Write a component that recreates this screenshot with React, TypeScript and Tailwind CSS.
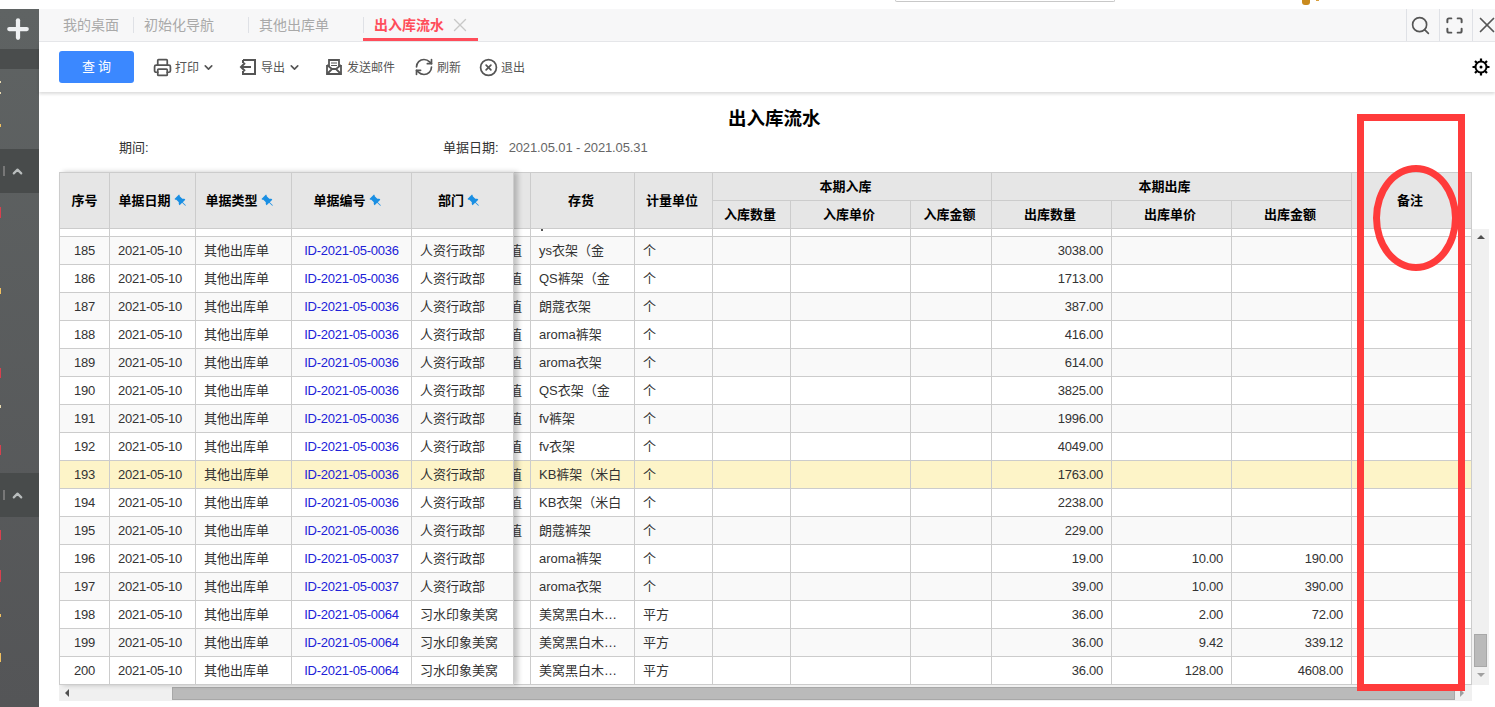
import { ChevronDown, ChevronUp, CircleX, Maximize, Plus, Printer, RefreshCw, Search, X } from "lucide-react";
import { BsPinAngleFill } from "react-icons/bs";

const font = "font-['Liberation_Sans','Noto_Sans_CJK_SC',sans-serif]";

type Row = {
  no: number;
  id: string;
  dept: string;
  hidden: string;
  stock: string;
  unit: string;
  outQty: string;
  outPrice?: string;
  outAmount?: string;
};

const base = (no: number, stock: string, outQty: string): Row => ({
  no,
  id: "ID-2021-05-0036",
  dept: "人资行政部",
  hidden: "值",
  stock,
  unit: "个",
  outQty,
});

const rows: Row[] = [
  base(185, "ys衣架（金", "3038.00"),
  base(186, "QS裤架（金", "1713.00"),
  base(187, "朗蔻衣架", "387.00"),
  base(188, "aroma裤架", "416.00"),
  base(189, "aroma衣架", "614.00"),
  base(190, "QS衣架（金", "3825.00"),
  base(191, "fv裤架", "1996.00"),
  base(192, "fv衣架", "4049.00"),
  base(193, "KB裤架（米白", "1763.00"),
  base(194, "KB衣架（米白", "2238.00"),
  base(195, "朗蔻裤架", "229.00"),
  { ...base(196, "aroma裤架", "19.00"), id: "ID-2021-05-0037", hidden: "", outPrice: "10.00", outAmount: "190.00" },
  { ...base(197, "aroma衣架", "39.00"), id: "ID-2021-05-0037", hidden: "", outPrice: "10.00", outAmount: "390.00" },
  { no: 198, id: "ID-2021-05-0064", dept: "习水印象美窝", hidden: "", stock: "美窝黑白木…", unit: "平方", outQty: "36.00", outPrice: "2.00", outAmount: "72.00" },
  { no: 199, id: "ID-2021-05-0064", dept: "习水印象美窝", hidden: "", stock: "美窝黑白木…", unit: "平方", outQty: "36.00", outPrice: "9.42", outAmount: "339.12" },
  { no: 200, id: "ID-2021-05-0064", dept: "习水印象美窝", hidden: "", stock: "美窝黑白木…", unit: "平方", outQty: "36.00", outPrice: "128.00", outAmount: "4608.00" },
];

const rowBg = (no: number) => (no === 193 ? "bg-[#fdf4c8]" : no % 2 ? "bg-[#f9f9f9]" : "bg-white");
const cell = "h-full shrink-0 border-r border-[#cccccc] flex items-center overflow-hidden whitespace-nowrap";
const head = "shrink-0 border-r border-b border-[#cccccc] flex items-center justify-center font-bold text-black";
const num = "tracking-[-0.25px]";
const tool = "mt-[2px]";

function Pin() {
  return <BsPinAngleFill size={13} className="ml-[3px] -scale-x-100 text-[#1a8fe3]" />;
}

function Export() {
  return (
    <svg width="17" height="16" viewBox="0 0 17 16" fill="none" stroke="#555555" strokeWidth="2">
      <path d="M4 1h12v14H4v-3M4 4V1" />
      <path d="M12 8H2M6 4 2 8l4 4" />
    </svg>
  );
}

function MailOpen() {
  return (
    <svg width="16" height="16" viewBox="0 0 16 16" fill="none" stroke="#555555" strokeWidth="1.8">
      <path d="M1 6v9h14V6" />
      <path d="M3 8V1h10v7" />
      <path d="M1 15l5-5h4l5 5M1 6l5 4M15 6l-5 4" />
      <path d="M5 4h6M5 6.500h6" strokeWidth="1.2" />
    </svg>
  );
}

function Gear() {
  return (
    <svg width="18" height="18" viewBox="0 0 18 18" fill="none" stroke="#000000">
      <circle cx="9" cy="9" r="5.500" strokeWidth="2" />
      <circle cx="9" cy="9" r="1.500" fill="#000000" stroke="none" />
      <path d="M9 0.500v3M9 14.500v3M0.500 9h3M14.500 9h3M3 3l2 2M13 13l2 2M15 3l-2 2M5 13l-2 2" strokeWidth="2.200" />
    </svg>
  );
}

function SideBand() {
  return (
    <div className="flex h-[44px] shrink-0 items-center bg-[#484b4b]">
      <div className="ml-[3px] h-[10px] w-[2px] bg-[#777777]" />
      <ChevronUp size={15} strokeWidth={3.5} className="ml-[5px] text-[#b9bdbd]" />
    </div>
  );
}

// clipped ends of the menu labels, only a pixel of each is showing
function Sliver({ cls }: { cls: string }) {
  return <div className={`w-px shrink-0 ${cls}`} />;
}

function Sidebar() {
  return (
    <aside className="flex w-[39px] shrink-0 flex-col bg-[linear-gradient(#5f6363,#545557)]">
      <div className="flex h-[40px] shrink-0 items-center justify-center pr-[3px]">
        <Plus size={30} strokeWidth={3.4} className="text-[#eef0f2]" />
      </div>
      <div className="h-[20px] shrink-0 bg-[#4a4d4d]" />
      <Sliver cls="mt-[12px] h-[2px] bg-[#e8d9b0]" />
      <Sliver cls="mt-[9px] h-[2px] bg-[#e8d9b0]" />
      <Sliver cls="mt-[30px] h-[3px] bg-[#f0c060]" />
      <div className="mt-[22px]" />
      <SideBand />
      <Sliver cls="mt-[14px] h-[11px] bg-[#d8404e]" />
      <Sliver cls="mt-[70px] h-[6px] bg-[#f0c060]" />
      <Sliver cls="mt-[74px] h-[10px] bg-[#d8404e]" />
      <Sliver cls="mt-[27px] h-[3px] bg-[#e8d9b0]" />
      <Sliver cls="mt-[37px] h-[10px] bg-[#d8404e]" />
      <div className="mt-[18px]" />
      <SideBand />
      <Sliver cls="mt-[13px] h-[10px] bg-[#d8404e]" />
      <Sliver cls="mt-[30px] h-[12px] bg-[#d8404e]" />
      <Sliver cls="mt-[32px] h-[3px] bg-[#f0c060]" />
      <Sliver cls="mt-[36px] h-[9px] bg-[#f0c060]" />
    </aside>
  );
}

function Tabs() {
  const tabs = [
    { label: "我的桌面", w: "w-[95px]", pad: "pl-[24px]" },
    { label: "初始化导航", w: "w-[115px]", pad: "pl-[10px]" },
    { label: "其他出库单", w: "w-[115px]", pad: "pl-[10px]" },
  ];
  return (
    <div className="flex h-[33px] shrink-0 border-b border-[#e6e7ea] bg-[#f7f7f8]">
      {tabs.map((t) => (
        <div key={t.label} className={`flex h-full items-center ${t.w} ${t.pad} text-[14px] text-[#a9a9a9]`}>
          <span className="flex-1">{t.label}</span>
          <div className="h-[16px] w-px bg-[#dfe1e6]" />
        </div>
      ))}
      <div className="-ml-px flex h-[32px] w-[115px] items-center border-b-[3px] border-[#ff4d5a] pl-[11px] pt-[3px] text-[14px] font-bold text-[#ff4d5a]">
        出入库流水
        <X size={22} strokeWidth={1.5} className="ml-[5px] shrink-0 text-[#c8c8c8]" />
      </div>
      <div className="flex-1" />
      <div className="flex h-full w-[33px] items-center justify-center border-l border-[#dfe1e6] pr-[6px]">
        <Search size={21} strokeWidth={1.9} className="shrink-0 text-[#555555]" />
      </div>
      <div className="flex h-full w-[33px] items-center justify-center border-l border-[#dfe1e6] pr-[4px]">
        <Maximize size={19} strokeWidth={2.5} className="shrink-0 text-[#555555]" />
      </div>
      <div className="flex h-full w-[23px] items-center justify-center border-l border-[#dfe1e6] pl-[5px]">
        <X size={26} strokeWidth={1.6} className="shrink-0 text-[#555555]" />
      </div>
    </div>
  );
}

function Toolbar() {
  return (
    <div className="relative z-20 flex h-[50px] shrink-0 items-center bg-white pl-[20px] text-[12px] text-[#555555] shadow-[0_2px_3px_rgba(0,0,0,0.14)]">
      <button className="h-[32px] w-[75px] rounded-[3px] bg-[#3b88ff] pl-[3px] text-[13px] tracking-[3px] text-white">查询</button>
      <Printer size={19} strokeWidth={2.2} className="ml-[19px]" />
      <span className={`ml-[3px] ${tool}`}>打印</span>
      <ChevronDown size={13} strokeWidth={3} className="ml-[3px]" />
      <div className="ml-[24px]"><Export /></div>
      <span className={`ml-[5px] ${tool}`}>导出</span>
      <ChevronDown size={13} strokeWidth={3} className="ml-[3px]" />
      <div className="ml-[25px]"><MailOpen /></div>
      <span className={`ml-[5px] ${tool}`}>发送邮件</span>
      <RefreshCw size={20} strokeWidth={2} className="ml-[19px]" />
      <span className={`ml-[3px] ${tool}`}>刷新</span>
      <CircleX size={19} strokeWidth={2.2} className="ml-[18px]" />
      <span className={`ml-[3px] ${tool}`}>退出</span>
      <div className="flex-1" />
      <div className="mr-[5px]"><Gear /></div>
    </div>
  );
}

function FrozenHead() {
  const h = "h-[57px] border-t";
  return (
    <div className="flex h-[57px] bg-[#e6e6e6]">
      <div className={`${head} ${h} w-[51px] border-l`}>序号</div>
      <div className={`${head} ${h} w-[86px]`}>单据日期<Pin /></div>
      <div className={`${head} ${h} w-[96px] pr-[8px]`}>单据类型<Pin /></div>
      <div className={`${head} ${h} w-[120px] pr-[8px]`}>单据编号<Pin /></div>
      <div className={`${head} ${h} w-[102px] pr-[7px]`}>部门<Pin /></div>
    </div>
  );
}

function FrozenRow({ r }: { r: Row }) {
  return (
    <div className={`flex h-[28px] border-b border-[#cccccc] ${rowBg(r.no)}`}>
      <div className={`${cell} ${num} w-[51px] justify-center border-l`}>{r.no}</div>
      <div className={`${cell} ${num} w-[86px] pl-[8px]`}>2021-05-10</div>
      <div className={`${cell} w-[96px] pl-[8px]`}>其他出库单</div>
      <div className={`${cell} ${num} w-[120px] justify-center text-[#2020d8]`}>{r.id}</div>
      <div className={`${cell} w-[102px] pl-[8px]`}>{r.dept}</div>
    </div>
  );
}

function ScrollHead() {
  const h = "h-[57px] border-t pr-[3px]";
  const sub = `${head} pr-[3px]`;
  return (
    <div className="flex h-[57px] bg-[#e6e6e6]">
      <div className={`${head} h-[57px] border-t w-[17px]`} />
      <div className={`${head} ${h} w-[104px]`}>存货</div>
      <div className={`${head} ${h} w-[78px]`}>计量单位</div>
      <div className="w-[279px] shrink-0">
        <div className={`${head} h-[29px] border-t pr-[13px]`}>本期入库</div>
        <div className="flex h-[28px]">
          <div className={`${sub} w-[78px]`}>入库数量</div>
          <div className={`${sub} w-[120px]`}>入库单价</div>
          <div className={`${sub} w-[81px]`}>入库金额</div>
        </div>
      </div>
      <div className="w-[360px] shrink-0">
        <div className={`${head} h-[29px] border-t pr-[14px]`}>本期出库</div>
        <div className="flex h-[28px]">
          <div className={`${sub} w-[120px]`}>出库数量</div>
          <div className={`${sub} w-[120px]`}>出库单价</div>
          <div className={`${sub} w-[120px]`}>出库金额</div>
        </div>
      </div>
      <div className={`${head} ${h} w-[120px]`}>备注</div>
    </div>
  );
}

function ScrollRow({ r }: { r: Row }) {
  const amount = `${cell} ${num} w-[120px] justify-end pr-[8px]`;
  return (
    <div className={`flex h-[28px] border-b border-[#cccccc] ${rowBg(r.no)}`}>
      <div className={`${cell} w-[17px] justify-end`}><span className="mr-[8px] shrink-0">{r.hidden}</span></div>
      <div className={`${cell} w-[104px] pl-[8px]`}>{r.stock}</div>
      <div className={`${cell} w-[78px] pl-[8px]`}>{r.unit}</div>
      <div className={`${cell} w-[78px]`} />
      <div className={`${cell} w-[120px]`} />
      <div className={`${cell} w-[81px]`} />
      <div className={amount}>{r.outQty}</div>
      <div className={amount}>{r.outPrice}</div>
      <div className={amount}>{r.outAmount}</div>
      <div className={`${cell} w-[120px]`} />
    </div>
  );
}

// row 184 has scrolled away, only its last 8px are left above row 185
function PartialRow({ widths, first, tailAt }: { widths: string[]; first?: boolean; tailAt?: number }) {
  return (
    <div className="flex h-[8px] border-b border-[#cccccc] bg-white">
      {widths.map((w, i) => (
        <div key={i} className={`${cell} ${w} ${first && i === 0 ? "border-l" : ""}`}>
          {tailAt === i && <div className="ml-[10px] h-[2px] w-[2px] self-start bg-[#555555]" />}
        </div>
      ))}
    </div>
  );
}

function Table() {
  return (
    <div className="flex h-[513px] w-[1413px] shrink-0 text-[13px] text-[#333333]">
      <div className="relative z-10 w-[455px] shrink-0 bg-white shadow-[4px_0_5px_rgba(0,0,0,0.22)]">
        <FrozenHead />
        <PartialRow first widths={["w-[51px]", "w-[86px]", "w-[96px]", "w-[120px]", "w-[102px]"]} />
        {rows.map((r) => <FrozenRow key={r.no} r={r} />)}
      </div>
      <div className="w-[958px] shrink-0 overflow-hidden">
        <ScrollHead />
        <PartialRow tailAt={1} widths={["w-[17px]", "w-[104px]", "w-[78px]", "w-[78px]", "w-[120px]", "w-[81px]", "w-[120px]", "w-[120px]", "w-[120px]", "w-[120px]"]} />
        {rows.map((r) => <ScrollRow key={r.no} r={r} />)}
      </div>
    </div>
  );
}

function VScroll() {
  return (
    <div className="mt-[57px] flex h-[456px] w-[17px] shrink-0 flex-col items-center bg-[#f0f0f0]">
      <div className="mt-[6px] h-0 w-0 border-x-[4px] border-b-[4px] border-x-transparent border-b-[#505050]" />
      <div className="mt-[395px] h-[33px] w-[13px] border border-[#a8a8a8] bg-[#bababa]" />
      <div className="mt-[6px] h-0 w-0 border-x-[4px] border-t-[4px] border-x-transparent border-t-[#a0a0a0]" />
    </div>
  );
}

function HScroll() {
  return (
    <div className="flex h-[16px] w-[1413px] items-center bg-[#f0f0f0]">
      <div className="ml-[6px] h-0 w-0 border-y-[4px] border-r-[4px] border-y-transparent border-r-[#505050]" />
      <div className="ml-[103px] h-[13px] w-[1283px] border border-[#a8a8a8] bg-[#bababa]" />
      <div className="ml-[5px] h-0 w-0 border-y-[4px] border-l-[4px] border-y-transparent border-l-[#a0a0a0]" />
    </div>
  );
}

export default function App() {
  return (
    <div className={`relative flex h-[707px] w-[1495px] flex-col overflow-hidden bg-white ${font}`}>
      <div className="flex h-[9px] shrink-0">
        <div className="ml-[895px] h-[2px] w-[220px] rounded-b-[2px] border-x border-b border-[#c8c8c8]" />
        <div className="ml-[187px] h-[5px] w-[8px] rounded-b-[3px] bg-[#c98a1e]" />
        <div className="ml-[6px] h-px w-[3px] bg-[#d9a040]" />
      </div>
      <div className="flex min-h-0 flex-1">
        <Sidebar />
        <main className="flex min-w-0 flex-1 flex-col">
          <Tabs />
          <Toolbar />
          <div className="pl-[20px]">
            <h1 className="mt-[13px] flex h-[28px] items-center pl-[669px] text-[18.5px] font-bold text-black">出入库流水</h1>
            <div className="mt-[5px] flex h-[20px] items-center text-[13px] text-[#333333]">
              <span className="ml-[60px] w-[324px]">期间:</span>
              <span>单据日期:</span>
              <span className="ml-[10px] tracking-[-0.12px] text-[#666666]">2021.05.01 - 2021.05.31</span>
            </div>
            <div className="mt-[14px] flex">
              <Table />
              <VScroll />
            </div>
            <HScroll />
          </div>
        </main>
      </div>
      <div className="absolute left-[1357px] top-[114px] h-[577px] w-[108px] border-[7px] border-[#ff3b3b]" />
      <div className="absolute left-[1373px] top-[165px] h-[106px] w-[86px] rounded-[50%] border-[7px] border-[#ff3b3b]" />
    </div>
  );
}
